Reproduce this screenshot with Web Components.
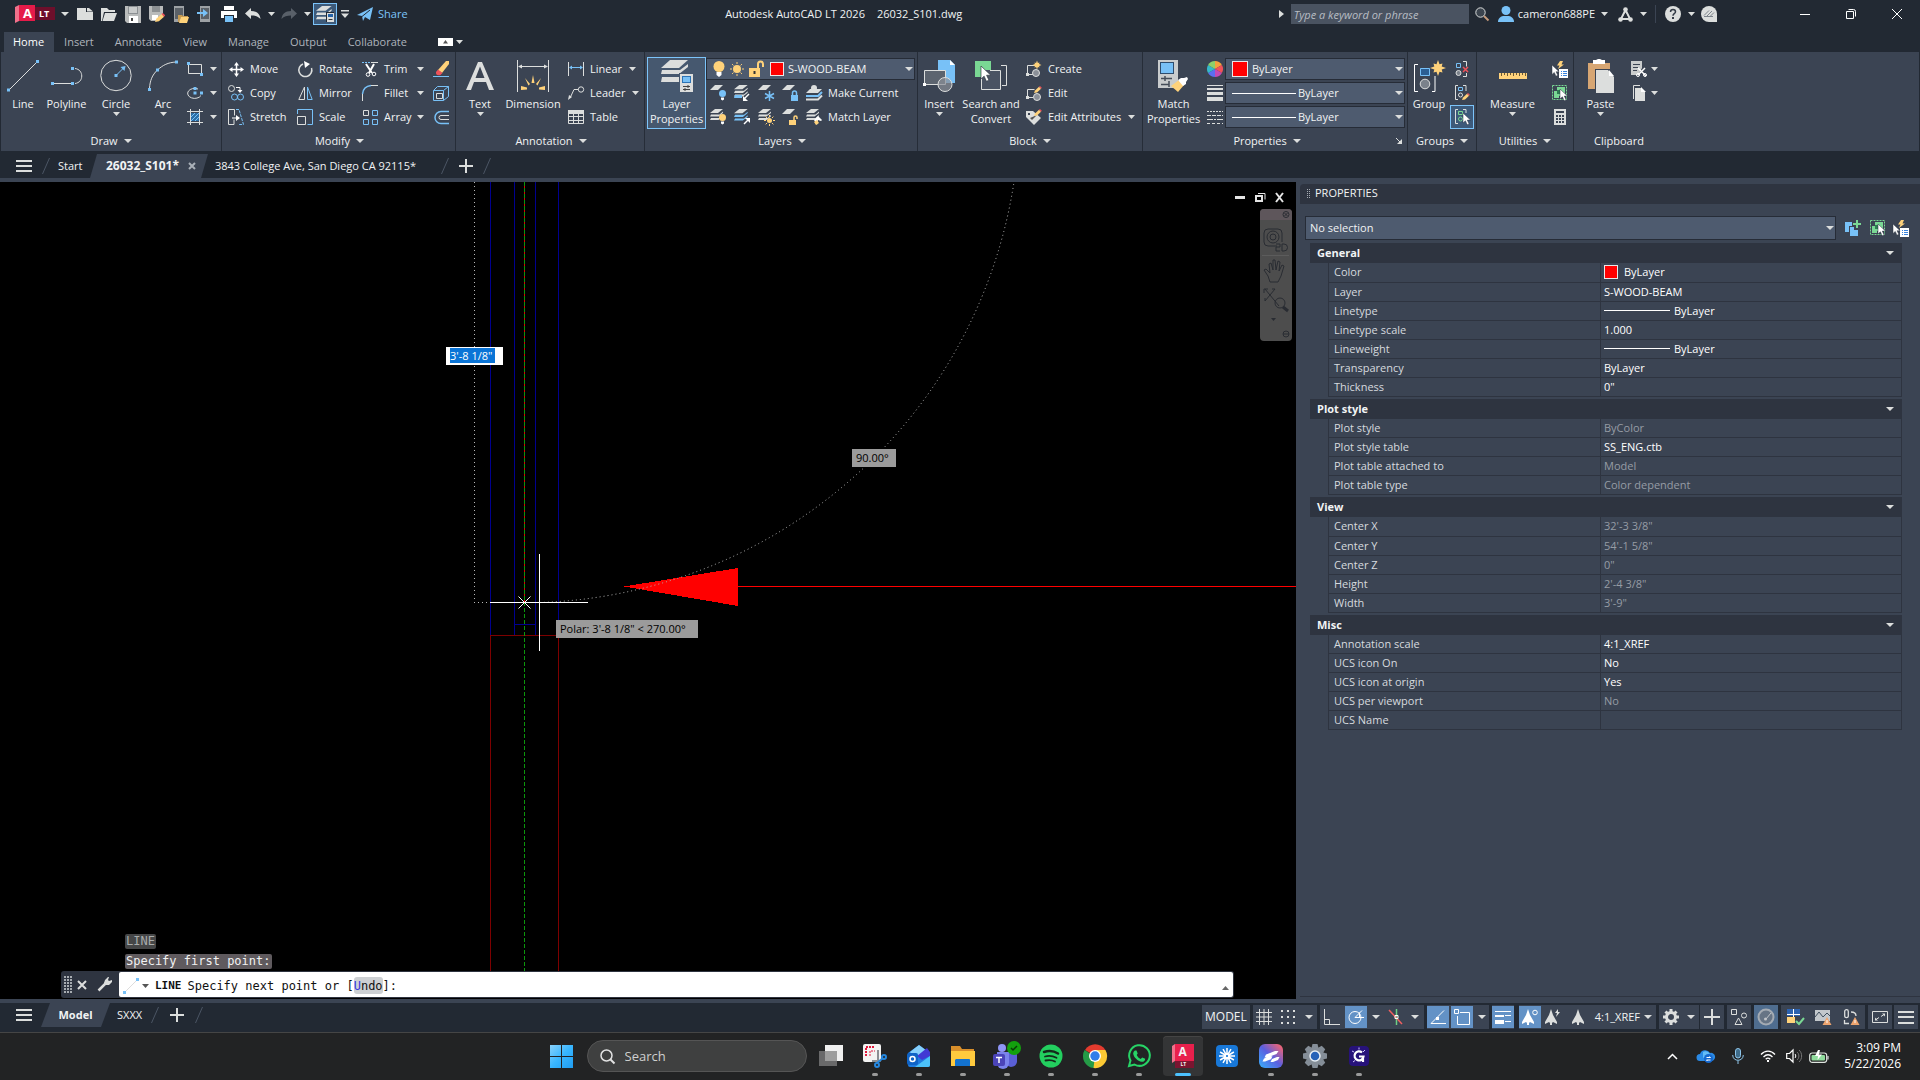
<!DOCTYPE html>
<html lang="en">
<head>
<meta charset="utf-8">
<title>Autodesk AutoCAD LT 2026</title>
<style>
  html, body { margin: 0; height: 100%; }
  body {
    background: #222933; color: #f1f3f4; overflow: hidden;
    font: 11px/16px "Open Sans", "Noto Sans", sans-serif;
    --dark: #222933; --panel: #3b4453; --field: #4e5b6f; --edge: #262c37; --head: #2e3440;
    --accent: #7cc4fa; --light: #dcdedd;
  }
</style>
</head>
<body>
<cad-app></cad-app>
<script>
const W = '#dcdedd', B = '#78c1f7', Y = '#ffd27a', G = '#7ad894', R = '#f0525a', D = '#3b4453';
const sq = (x, y, c = B) => `<path fill="${c}" d="M${x - 1.5} ${y - 1.5}h3v3h-3z"/>`;
const ln = (d, c = W, w = 1, extra = '') => `<path fill="none" stroke="${c}" stroke-width="${w}" d="${d}" ${extra}/>`;
const fl = (d, c = W) => `<path fill="${c}" d="${d}"/>`;
const cursor = (x, y, s = 1) => `<path transform="translate(${x} ${y}) scale(${s})" fill="#fff" stroke="#2b3340" stroke-width=".5" d="M0 0v10l2.4-2.2 1.8 4 1.9-.9-1.8-3.8h3.2z"/>`;
const pencil = (x, y) => `<g transform="translate(${x} ${y})">${fl('M0 7l1-2.6L5 .8l2 2L3 6.4z', Y)}${fl('M5 .8L6 0l1.800 1.800-.8 1z', R)}</g>`;
const sheets = (x, y, s = 1, low = W) => `<g transform="translate(${x} ${y}) scale(${s})">${fl('M5 0h8L8 4H0z')}${fl('M1 5.500h8.500L13 2.600v1.300L8.500 7.500H0z', low)}${fl('M1 9h8.500L13 6v1.300L8.500 11H0z', low)}</g>`;
const bulb = (x, y, c) => `<g transform="translate(${x} ${y})"><circle cx="3.500" cy="3.500" r="3.500" fill="${c}"/>${fl('M2 7.500h3v2l-1.500 1L2 9.500z', '#fff')}</g>`;
const sun = (x, y, r) => `<circle cx="${x}" cy="${y}" r="${r}" fill="${Y}"/>` + ln([0, 45, 90, 135, 180, 225, 270, 315].map(a => { const c = Math.cos(a * Math.PI / 180), s = Math.sin(a * Math.PI / 180); return `M${x + c * (r + 1)} ${y + s * (r + 1)}L${x + c * (r + 3)} ${y + s * (r + 3)}`; }).join(''), Y);
const star = (x, y, r) => fl(Array.from({ length: 16 }, (_, i) => { const q = i % 2 ? r * .5 : (i % 4 ? r * .8 : r), a = i * Math.PI / 8; return (i ? 'L' : 'M') + (x + q * Math.sin(a)).toFixed(1) + ' ' + (y - q * Math.cos(a)).toFixed(1); }).join('') + 'z', Y);
const rays = (x, y, r0, r1, n, c, w) => ln(Array.from({ length: n }, (_, k) => { const a = k * 2 * Math.PI / n; return `M${(x + r0 * Math.cos(a)).toFixed(1)} ${(y + r0 * Math.sin(a)).toFixed(1)}L${(x + r1 * Math.cos(a)).toFixed(1)} ${(y + r1 * Math.sin(a)).toFixed(1)}`; }).join(''), c, w);

const ICONS = {
  caret: [7, 4, fl('M0 0h7L3.500 4z')],
  bigcaret: [8, 4, fl('M0 0h8L4 4z')],
  up: [7, 4, fl('M0 4h7L3.500 0z', '#666')],
  right: [5, 8, fl('M0 0v8l5-4z')],
  barcaret: [8, 8, fl('M0 0h8v1.500H0zM0 3.500h8L4 8z')],
  logo: [40, 18, fl('M0 2l4-2v16l-4 2z', '#f0718b') + fl('M4 0h16v16H4z', '#e51b49') + fl('M20 2h20v13H20z', '#6d0f2b')],
  new: [16, 12, fl('M0 0h9v4h7v8H0z') + fl('M10 0h2l4 3.500H10z')],
  open: [16, 13, fl('M0 0h6l2 2h6v2H3L1 13H0z') + fl('M4 5h12l-3 8H1.500z')],
  save: [16, 17, fl('M0 0h16v17H2l-2-2z', '#b9bbbb') + fl('M3 0h10v8H3z', '#8c9093') + fl('M4 1h8v6H4z', '#c9cbcb') + fl('M4 10h9v7H4z', '#fff') + fl('M6 12h2v3H6z', '#444')],
  saveas: [17, 17, fl('M0 0h14v9l-6 6H2l-2-2z', '#b9bbbb') + fl('M3 0h8v6H3z', '#8c9093') + fl('M3 9h6v5H3z', '#fff') + `<g transform="translate(6 7) scale(1.300)">${pencil(0, 0)}</g>`],
  phoneopen: [16, 17, fl('M1 0h10v16H1z', '#9da1a5') + fl('M2 2h8v11H2z', '#5b6168') + fl('M5 9h4l1 1h5v2H8l-2 4H5z', '#c79b52') + fl('M8 11h8l-2 6H6z', Y)],
  phonesave: [16, 17, fl('M3 0h10v16H3z', '#9da1a5') + fl('M4 2h8v11H4z', '#5b6168') + ln('M0 7h7', B, 2) + fl('M6 3l5 4-5 4z', B)],
  print: [16, 16, fl('M3 0h10v4H3zM0 5h16v7h-3V9H3v3H0z', '#fff') + fl('M4 10h8v6H4z', B)],
  undo: [16, 12, fl('M6 0v3c6 0 9 3 9.500 8C13 8 10 7.500 6 7.500V11L0 5.500z')],
  redo: [16, 12, fl('M10 0v3C4 3 1 6 .5 11 3 8 6 7.500 10 7.500V11l6-5.500z', '#596069')],
  qlayers: [18, 16, sheets(0, 0, 1.200) + fl('M10 6h8v10h-8z', '#222933') + fl('M11 7h7v9h-7z') + fl('M12 8h5v3h-5z', '#2563a8') + ln('M12.500 13.500h4', '#333')],
  plane: [16, 15, fl('M0 8L16 0l-3 13-5-3-2 4-1-5z', B) + ln('M5 9.500L13 3', '#222933')],
  mag: [14, 14, `<circle cx="5.500" cy="5.500" r="4.700" fill="#3c444e" stroke="${W}"/>` + ln('M9 9l4.500 4.500', '#c59a7b', 2)],
  user: [16, 16, `<circle cx="8" cy="4.500" r="4.500" fill="${B}"/>` + fl('M0 16c0-4 3-5.500 5-6h6c2 .5 5 2 5 6z', B)],
  anode: [15, 15, ln('M3 12L7.500 3l4.500 9M3 12h9', W, 2) + `<circle cx="7.500" cy="2.500" r="2.300" fill="${W}"/><circle cx="2.500" cy="12.500" r="2.300" fill="${W}"/><circle cx="12.500" cy="12.500" r="2.300" fill="${W}"/>` + fl('M7.500 6l2 4h-4z', '#222933')],
  help: [16, 16, `<circle cx="8" cy="8" r="8" fill="${W}"/>` + ln('M5.500 6c0-3.500 5-3.200 5-.3 0 2-2.500 2-2.500 4', '#333b46', 1.500) + fl('M7 11h2v2H7z', '#333b46')],
  chat: [16, 16, fl('M8 0a8 8 0 0 1 8 8v8H8A8 8 0 0 1 8 0z') + ln('M3 9.500l5-5M6 10l5-5M9 10.500l4-4M3 10.500h9', '#7d848c')],
  wmin: [10, 10, ln('M0 5.500h10', '#fff')],
  wmax: [10, 10, ln('M.5 2.500h7v7h-7z', '#fff') + ln('M2.500 .5h5a2 2 0 0 1 2 2v5', '#fff')],
  wclose: [10, 10, ln('M0 0l10 10M10 0L0 10', '#fff')],
  ribmin: [15, 8, fl('M0 0h15v8H0z', '#fff') + fl('M5 5.500h5L7.500 2z', '#555')],

  line: [32, 32, ln('M3 29L29 3') + sq(1.5, 30) + sq(30.5, 1.5)],
  polyline: [32, 32, ln('M2 23.500h19') + ln('M24 8.500c9 1 9 14 0 15') + sq(1.5, 23.5) + sq(21.5, 8.5) + sq(21.5, 23.5)],
  circle: [32, 32, `<circle cx="16" cy="15.500" r="15.200" fill="none" stroke="${W}"/>` + ln('M16 15.500l8-8', B) + fl('M25.500 6l-1 5-4-4z', B) + sq(16, 15.5)],
  arc: [32, 32, ln('M2.500 28C3 21 5 15 10.500 10 16 5 21 2.500 29 2') + sq(2.5, 29.5) + sq(10.5, 10) + sq(29.5, 2)],
  rect: [16, 14, ln('M1.500 2.500h13v9h-13z') + sq(1.5, 1.5) + sq(14.5, 12.500)],
  ellipse: [16, 12, ln('M14 8.500A7 5 0 1 1 11 2') + sq(8, 1.5) + sq(8, 6) + sq(14.5, 6)],
  hatch: [16, 16, fl('M4 4h8v8H4z', '#2b6ea6') + ln('M4 8l4-4M4 12l8-8M8 12l4-4', B) + ln('M3.500 0v16M12.500 0v16M0 2.500h16M0 13.500h16')],
  move: [15, 15, ln('M7.500 2v11M2 7.500h11', '#fff', 1.500) + fl('M7.500 0L10 3.500H5zM7.500 15L10 11.500H5zM0 7.500L3.500 5v5zM15 7.500L11.500 5v5z', '#fff')],
  rotate: [15, 16, ln('M5 3A6.500 6.500 0 1 0 13.500 7', W, 1.500) + fl('M6 0l6 3-5 4z', '#fff')],
  trim: [16, 16, ln('M0 1.500h8', B, 1, 'stroke-dasharray="2 1"') + ln('M9 1.500h7') + ln('M4 3l6 9M12 3L7 12', '#fff', 2) + `<circle cx="6" cy="13.500" r="1.800" fill="none" stroke="#fff"/><circle cx="12" cy="13" r="1.800" fill="none" stroke="#fff"/>`],
  erase: [16, 16, fl('M5 9l8-9h3v3l-7 9z', Y) + fl('M3 11l2-2.500L9.500 12 7.500 14c-3 1-5-.5-4.500-3z', R) + ln('M0 15.500h16', B)],
  copy: [16, 16, `<circle cx="3.500" cy="3.500" r="3" fill="none" stroke="${W}"/><circle cx="6.500" cy="12" r="3" fill="none" stroke="${B}"/><circle cx="12.500" cy="12" r="3" fill="none" stroke="${B}"/>` + ln('M8 2.500h4v3', '#fff') + fl('M9.500 5h5L12 8z', '#fff')],
  mirror: [15, 14, ln('M.8 13.500H6.500V1z') + ln('M14.200 13.500H9.500V1z', B)],
  fillet: [16, 16, ln('M.5 16V9M9 .5h7') + ln('M.5 9C1 4 4 1 9 .5', B, 1.500)],
  explode: [16, 15, ln('M.5 4.500h10v10H.5z', B) + ln('M.5 4.500l4-4h11v10l-5 4M10.500 4.500l5-4', B) + ln('M3.500 7.500h6v5h-6z', W) ],
  stretch: [16, 16, ln('M6 10.500v5H.5V.5h6v6') + ln('M4 9h5', '#fff') + fl('M8 6l4 3-4 3z', '#fff') + ln('M8 .5h3l4.500 15H11', B, 1, 'stroke-dasharray="3 1"')],
  scale: [16, 16, ln('M.5 5V.5h15v15h-5', B) + ln('M.5 7.500h8v8h-8z')],
  array: [15, 15, ln('M.5 .5h5v5h-5z') + ln('M9.500 .5h5v5h-5zM.5 9.500h5v5h-5zM9.500 9.500h5v5h-5z', B)],
  offset: [16, 13, ln('M16 .5H8a6 6 0 0 0 0 12h8', B, 1.500) + ln('M16 4.500H8a2 2 0 0 0 0 4h8')],

  text: [28, 30, fl('M0 29L12 1h4l12 28h-5l-3-8H8l-3 8zM9.500 17h9L14 5.500z')],
  dim: [32, 32, ln('M.5 0v32M31.500 0v32') + ln('M2 6.500h28') + fl('M1 6.500l4-2v4zM31 6.500l-4-2v4z') + fl('M16 15l1.500 8h-3zM8 18l5 6-1.500 1.500zM24 18l-5 6 1.500 1.500zM4 26l6 1.500v2L4 30zM28 26v4l-6-.5v-2z', Y)],
  linear: [16, 14, ln('M.5 0v14M15.500 0v14') + ln('M2 5.500h12', B) + fl('M1 5.500l3-2v4zM15 5.500l-3-2v4z', B)],
  leader: [16, 14, ln('M2 12l4-8.500h4.500', W) + `<circle cx="13" cy="3.500" r="2.700" fill="none" stroke="${W}"/>` + fl('M0 14l1-5 3 2z')],
  table: [16, 14, fl('M0 0h16v4H0z') + ln('M.5 .5h15v13H.5zM.5 6.500h15M.5 10.500h15M5.500 3v11M10.500 3v11')],
  layerprop: [32, 33, fl('M9 0h18L18 8H0z') + fl('M1 10h18l8-6v3l-9 7H0z') + fl('M1 17h18l2-2v5l-3 2H0z') + fl('M18 13h14v20H18z', '#46586f') + fl('M19 14h13v18H19z') + fl('M21 16h9v7h-9z', '#2d74b5') + fl('M22 17h7v5h-7z', B) + ln('M22 26.500h7M22 29.500h7M27 25v3M24 28v3', '#444')],
  lbulb: [12, 16, `<circle cx="6" cy="5.500" r="5.500" fill="${Y}"/>` + fl('M3.500 11h5v3L6 16l-2.500-2z', '#fff')],
  lsun: [16, 16, sun(8, 8, 4)],
  lunlock: [15, 16, fl('M0 7h11v9H0z', Y) + ln('M9 7V3a2.500 2.500 0 0 1 5 0v3', Y, 2) + fl('M4.500 10h2v3h-2z', '#333')],
  loff: [16, 16, fl('M5 0h8L8 5H0z') + bulb(9, 5, B)],
  liso: [16, 16, sheets(0, 0, 1.05) + fl('M1 10h7v3H0z', B) + ln('M15 9l-5 5', '#fff', 1.500) + fl('M9 11v5h5z', '#fff')],
  lfreeze: [16, 16, fl('M5 0h8L8 5H0z') + ln('M11.500 6v10M7 8.500l9 5M16 8.500l-9 5', B, 1.500)],
  llock: [16, 16, fl('M5 0h8L8 5H0z') + fl('M9 10h7v6H9z', B) + ln('M10.500 10V8a2 2 0 0 1 4 0v2', B, 1.500)],
  lcur: [16, 16, fl('M4 4h12l-4 4H0z') + ln('M0 11h12l4-4', B, 2) + ln('M0 14.500h12l4-4', W, 2) + `<circle cx="8" cy="3" r="3" fill="${W}"/>`],
  lon: [16, 16, sheets(0, 0, 1) + bulb(9, 5, Y)],
  luniso: [16, 16, sheets(0, 0, 1.05, B) + ln('M10 15l5-5', '#fff', 1.500) + fl('M16 9v5l-5-5z', '#fff')],
  lthaw: [16, 16, sheets(0, 0, 1) + sun(11.5, 11.5, 2.5)],
  lunlk: [16, 16, fl('M5 0h8L8 5H0z') + fl('M7 11h7v5H7z', Y) + ln('M12 11V8.500a1.500 1.500 0 0 1 3 0V10', Y, 1.500)],
  lmatch: [16, 16, sheets(0, 0, 1) + fl('M8 11l4-4 4 4-1 1-3-1-1 5z', '#fff') + fl('M8 13l3-2 2 3-3 2z', Y)],

  insert: [32, 33, fl('M15 0h12l5 5v18H15z', B) + fl('M27 0v5h5z', '#fff') + fl('M1.500 10.500h21v14h-21z', '#5c646f') + ln('M1.500 24.500v-14h21v14H1.500z') + `<circle cx="22" cy="24.500" r="7" fill="#8b9098" fill-opacity=".7" stroke="${W}"/>` + fl('M0 23h3v3H0z', '#fff')],
  searchconv: [32, 30, fl('M0 0h16v16H0z', G) + ln('M26 4.500h5.500v20H27') + fl('M6 9h20v20H6z', '#4a5363') + ln('M6.500 16v12.500h19v-19H15') + cursor(6, 5, 1.3)],
  create: [16, 16, ln('M1.500 13V4.500h8M3 13.500h4', W) + fl('M0 12h3v3H0z') + `<circle cx="10" cy="12" r="3.500" fill="#8b9098" stroke="${W}"/>` + star(11, 4, 4.5)],
  bedit: [16, 16, ln('M1.500 12V4.500h7M3 12.500h4', W) + fl('M0 11h3v3H0z') + `<circle cx="11" cy="12" r="3.500" fill="#8b9098" stroke="${W}"/>` + pencil(8, 1)],
  attr: [16, 16, fl('M0 2h7l8 7-7 7-8-8z') + fl('M2 4h2v2H2z', D) + fl('M4 9l2 2 5-5', '#555') + pencil(8, 0)],
  matchprop: [32, 32, fl('M0 0h20v28H0z', '#c9cccd') + fl('M2 2h14v12H2z', '#2e4d6e') + fl('M3 3h12v10H3z', B) + ln('M3 18.500h11M7 16v5M3 24.500h8M11 21v6', '#454d59', 1.500) + fl('M13 26l8-6 5 5-6 7z', Y) + fl('M20 20l3-2h3l3-1 1 2-2 3 0 2-3 2z', '#fff')],
  wheel: [16, 16, [['#f4a03c', 0], ['#f0525a', 60], ['#c44ab4', 120], ['#5b6ef0', 180], ['#35b8c9', 240], ['#8cd06a', 300]].map(([c, a]) => `<path transform="rotate(${a} 8 8)" fill="${c}" d="M8 8V0a8 8 0 0 1 6.900 4z"/>`).join('')],
  lweights: [16, 16, fl('M0 0h16v1H0zM0 3h16v2H0zM0 7h16v3H0zM0 12h16v4H0z')],
  ltypes: [16, 13, ln('M0 .5h16', W, 1, 'stroke-dasharray="2 1"') + ln('M0 4.500h16', W, 1, 'stroke-dasharray="4 1"') + ln('M0 8.500h16', W, 1, 'stroke-dasharray="6 1 2 1"') + ln('M0 12.500h16', W, 1, 'stroke-dasharray="3 2"')],
  launcher: [6, 6, ln('M0 0l4 4', W) + fl('M6 1v5H1z')],
  group: [32, 32, ln('M5 4.500H1.500v27H5M19 31.500h3V16', '#fff') + fl('M7 8h10v8H7z', '#2b5f94') + ln('M7.500 8.500h9v7h-9z', B) + `<circle cx="12" cy="24" r="4.800" fill="#7b828b" stroke="${W}"/>` + star(25, 8, 8)],
  ungroup: [14, 16, ln('M1.500 2.500h4v4h-4z', B) + `<circle cx="3.500" cy="12" r="2.500" fill="#7b828b" stroke="${W}"/>` + ln('M8 .5h3.500v5M11.500 12v3.500H8') + ln('M8 6l5 5M13 6l-5 5', R, 1.500)],
  gedit: [15, 16, ln('M3 .5H.5v14H3M8 .5h3V6') + ln('M3.500 2.500h4v3h-4z', B) + `<circle cx="5.500" cy="10" r="2" fill="none" stroke="${W}"/>` + `<g transform="translate(7 8)">${pencil(0, 0)}</g>`],
  gsel: [15, 16, ln('M3 .5H.5v14H3M8 .5h3V4') + ln('M3.500 2.500h4v3h-4z', G) + `<circle cx="5.500" cy="10" r="2" fill="none" stroke="${G}"/>` + cursor(8, 4)],
  measure: [28, 6, fl('M0 0h28v6H0z', Y) + ln('M2.500 0v3M5.500 0v2M8.500 0v3M11.500 0v2M14.500 0v3M17.500 0v2M20.500 0v3M23.500 0v2M26.500 0v3', '#6b5a36')],
  qsel: [16, 17, fl('M8 0h3L9.500 3.500H12L6 8l1.500-3.500H5z', Y) + fl('M7 8h9v9H7z', '#fff') + ln('M9 10.500h1M11 10.500h4M9 12.500h1M11 12.500h4M9 14.500h1M11 14.500h4', '#3a84dd') + cursor(0, 4, .95)],
  selall: [15, 16, ln('M.5 .5h14v14H.5z', G, 1, 'stroke-dasharray="2 1"') + fl('M2 6h3V2h8v9H7v2H2z', G) + fl('M5 5h3v4H5z', '#2e7d52') + cursor(8, 4)],
  calc: [12, 16, fl('M0 0h12v16H0z') + fl('M2 2h8v2H2zM2 6h2v2H2zM5 6h2v2H5zM8 6h2v2H8zM2 9h2v2H2zM5 9h2v2H5zM8 9h2v2H8zM2 12h2v2H2zM5 12h2v2H5zM8 12h2v2H8z', '#3b4453')],
  paste: [26, 33, fl('M0 3h22v26H0z', '#d7a673') + fl('M5 0h3l2-1h2l2 1h3v4H5z', '#fff') + fl('M7 9h18v24H7z', '#3b4453') + fl('M8 10h12l6 7v16H8z') + fl('M21 10v6h5z', '#fff')],
  cut: [16, 16, fl('M0 0h11v7l-4 7H0z', '#c9cccd') + ln('M2 3.500h7M2 6.500h5M2 9.500h4', '#3b4453') + ln('M7 7l8 8M14 7l-7 7', '#fff', 1.500) + `<circle cx="7" cy="14" r="1.500" fill="none" stroke="#fff"/><circle cx="14" cy="14" r="1.500" fill="none" stroke="#fff"/>`],
  copyclip: [13, 16, ln('M1.500 14V.5H8') + fl('M3 3h6l4 4v9H3z') + fl('M9 2v5h5z', '#fff')],

  burger: [16, 12, fl('M0 0h16v2H0zM0 5h16v2H0zM0 10h16v2H0z')],
  plus: [14, 14, fl('M6 0h2v6h6v2H8v6H6V8H0V6h6z')],
  slash: [8, 16, ln('M.5 16L7.500 0', '#4b5564')],
  tabx: [8, 8, ln('M1 1l6 6M7 1L1 7', '#a9b0b8', 2)],

  mmin: [10, 3, fl('M0 0h10v3H0z', '#e4e4e4')],
  mmax: [11, 10, ln('M1 4h6v5H1z', '#e4e4e4', 2) + ln('M3 1.500h7v6', '#e4e4e4')],
  mclose: [9, 9, ln('M1 0l7 9M8 0L1 9', '#e4e4e4', 2)],
  navbar: [32, 132, `<rect width="32" height="132" rx="4" fill="#4d4d4d"/>` + fl('M0 4a4 4 0 0 1 4-4h24a4 4 0 0 1 4 4v7H0z', '#5e565b') + ln('M2 46.500h27', '#5c5c5c') + `<g fill="none" stroke="#292c32"><circle cx="26" cy="5.500" r="3"/><path d="M24.500 4l3 3M27.500 4l-3 3"/><path d="M17 37H8a4 4 0 0 1-4-4v-9a4 4 0 0 1 4-4h10a4 4 0 0 1 4 4v9"/><circle cx="13" cy="28" r="6"/><circle cx="13" cy="28" r="3"/><path d="M16 35h4v3h-4v4h4M22 35v7h2a3 3 0 0 0 0-7z"/><path d="M8 67l-4-6 2-1 4 4-1-9 2-1 2 7v-10h2l1 10 2-9 2 1-1 9 3-6 2 1-3 10-3 6h-8zM5 80l14 17M15 80L5 92M4 84v-4h4M15 80h-3M5 92v-3"/><circle cx="20" cy="94" r="5"/><path d="M23 98l5 4" stroke-width="3"/><circle cx="26" cy="125" r="3"/><path d="M23 125h6"/></g>` + fl('M11 109h5l-2.500 3z', '#292c32')],
  grip: [7, 17, ln('M1 0v17M4 0v17M7 0v17', '#d0d3d6', 1.500, 'stroke-dasharray="2 1"')],
  pgrip: [3, 9, ln('M.5 0v9M2.500 0v9', '#a6abb2', 1, 'stroke-dasharray="1 1"')],
  cx: [10, 10, ln('M1 1l8 8M9 1L1 9', '#dcdedd', 2)],
  wrench: [15, 15, ln('M1.500 13.500L9 6', W, 2.500) + fl('M8 3l3-3 1 0-1 3 1 1 3-1v2l-3 3H9L7 6z')],
  cline: [16, 16, ln('M2 14L14 2', '#ddd') + sq(1.5, 14.5) + sq(14.5, 1.5)],
  ccaret: [7, 4, fl('M0 0h7L3.500 4z', '#555')],

  grid: [16, 16, ln('M3.500 0v16M8 0v16M12.500 0v16M0 3.500h16M0 8h16M0 12.500h16')],
  snap: [14, 14, fl('M0 0h2v2H0zM6 0h2v2H6zM12 0h2v2h-2zM0 6h2v2H0zM6 6h2v2H6zM12 6h2v2h-2zM0 12h2v2H0zM6 12h2v2H6zM12 12h2v2h-2z')],
  ortho: [16, 16, ln('M.5 0v15.500H16M.5 10.500h5v5')],
  polar: [16, 16, `<circle cx="7" cy="8.500" r="6" fill="none" stroke="#fff"/>` + ln('M7 8.500h9M7 8.500l7-7M11.500 3.500v5', '#fff')],
  iso: [14, 16, ln('M7.500 0v16', '#6fcf86', 1.500) + ln('M0 1l13 14', '#f06060', 1.500) + ln('M6 6.500h3v3H6z', '#fff')],
  otrack: [16, 14, ln('M16 13.500H1L14 .5', '#fff') + fl('M6 7h3v3H6z', '#fff')],
  osnap: [16, 16, ln('M6 3.500h9.500v12h-12V7', '#fff') + ln('M.5 .5h4v4h-4z', '#fff')],
  lw: [16, 13, fl('M0 0h16v1H0zM0 4h9v2H0zM10 4h6v1h-6zM0 9h9v4H0zM10 10h6v1h-6z', '#fff')],
  annovis: [16, 16, fl('M6 0l2 6 4 7v2l-4-2-1 1v2H5v-2l-1-1-4 2v-2l4-7z', '#fff') + `<circle cx="13" cy="3.500" r="2.300" fill="none" stroke="#fff"/>`],
  annoauto: [16, 16, fl('M6 0l2 6 4 7v2l-4-2-1 1v2H5v-2l-1-1-4 2v-2l4-7z') + fl('M13 0l-3 4h2l-1 4 4-5h-2z')],
  anno: [14, 16, fl('M7 0l2 6 4 7v2l-4-2-1 1v2H6v-2l-1-1-4 2v-2l4-7z')],
  gear: [16, 16, `<circle cx="8" cy="8" r="4.500" fill="none" stroke="${W}" stroke-width="3"/>` + ln('M8 0v3M8 13v3M0 8h3M13 8h3M2.500 2.500l2 2M11.500 11.500l2 2M13.500 2.500l-2 2M4.500 11.500l-2 2', W, 3)],
  splus: [16, 16, fl('M7 0h2v7h7v2H9v7H7V9H0V7h7z')],
  shapes: [16, 16, ln('M.5 .5h5v5h-5zM4 15.500h7L7.500 9z') + `<circle cx="13" cy="6.500" r="2.500" fill="none" stroke="${W}"/>`],
  isolate: [18, 18, `<circle cx="9" cy="9" r="7.500" fill="#667485" stroke="#a4abb3" stroke-width="2"/>` + ln('M9 11l5-6', '#c1c5ca') + `<circle cx="8.500" cy="11" r="1.500" fill="#c1c5ca"/>`],
  hw: [17, 16, fl('M0 0h13v7H0z', '#2c62b0') + fl('M0 8h8v6H0z', Y) + ln('M6.500 0v8M0 5.500h13', '#fff') + ln('M9 12l3 3 5-6', G, 2)],
  mon: [16, 16, fl('M0 1h15v11H0z', '#c3c8cc') + ln('M0 8l4-5 4 5 4-4 3 3', '#40505f') + fl('M12 8l4.500 8h-9z', '#eea56f') + ln('M12 11v3', '#fff')],
  asso: [17, 16, `<rect x="1.700" y=".7" width="3.600" height="8" rx="1.800" fill="none" stroke="${W}" stroke-width="1.300"/>` + ln('M1.500 11v3.500H6M8 3c3 0 5 1 5 4', W, 1.300) + fl('M12 8l4.500 8h-9z', '#eea56f') + ln('M12 11v3', '#fff')],
  clean: [16, 12, ln('M.5 .5h15v11H.5z') + ln('M4 8.500l3-2M12 3.500l-3 2') + fl('M3 9.500V6.500l3 3zM13 2.500v3l-3-3z')],
  custom: [16, 13, fl('M0 0h16v2H0zM0 5h16v2H0zM0 11h16v2H0z')],

  paddobj: [16, 16, fl('M0 2h7v10H0z', B) + fl('M4 6h5v3h5v7H6V12H4z', D) + fl('M5 7h4v3h4v6H5z', B) + ln('M12 0v8M8 4h8', G, 2)],

  win: [23, 23, `<linearGradient id="w" x2="1" y2="1"><stop stop-color="#8ad2fb"/><stop offset=".5" stop-color="#38b6ff"/><stop offset="1" stop-color="#1f9cf0"/></linearGradient><path fill="url(#w)" d="M0 0h11v11H0zM12 0h11v11H12zM0 12h11v11H0zM12 12h11v11H12z"/>`],
  smag: [15, 15, `<circle cx="6.500" cy="6.500" r="5.500" fill="none" stroke="#e2e2e2" stroke-width="1.500"/>` + ln('M10.500 10.500l4 4', '#e2e2e2', 2)],
  taskview: [24, 22, fl('M6 0h18v16H6z', '#f0f0f0') + fl('M0 6h18v15H0z', 'rgba(130,130,130,.75)')],
  snip: [24, 24, `<rect width="18" height="18" rx="2" fill="#f3f3f3"/>` + ln('M3 12V3h9', '#e0193c', 2, 'stroke-dasharray="2 1"') + ln('M7 12V7h5', '#e0193c', 1, 'stroke-dasharray="2 1"') + ln('M15 6v11H9', '#8b8f94', 2) + ln('M14 19l6-5', '#2588e0', 2) + `<circle cx="21" cy="13" r="2" fill="none" stroke="#2588e0" stroke-width="2"/><circle cx="14" cy="21" r="2" fill="none" stroke="#2588e0" stroke-width="2"/>`],
  outlook: [24, 24, fl('M1 9L12 1l11 8v12a2 2 0 0 1-2 2H3a2 2 0 0 1-2-2z', '#1f7be0') + fl('M8 4l4-3 8 6-12 7-5-6z', '#86d0fb') + fl('M10 12l10-8 3 4v4l-8 4z', '#4138d4') + fl('M8 23l15-11v9a2 2 0 0 1-2 2z', '#4cc2fa') + `<rect y="9" width="11" height="12" rx="2" fill="#0f63c6"/><circle cx="5.500" cy="15" r="2.500" fill="none" stroke="#fff" stroke-width="1.500"/>`],
  files: [24, 22, fl('M0 1h9l2 3h12v4H0z', '#d98f2b') + fl('M0 6h24v15H0z', '#ffca3e') + fl('M5 14h13a1 1 0 0 1 1 1v6H4v-6z', '#1372cf')],
  teams: [28, 26, `<circle cx="9" cy="5" r="4" fill="#8e95f5"/>` + fl('M13 9h8a3 3 0 0 1 3 3v7a6 6 0 0 1-11 2z', '#5a5fd6') + fl('M4 9h12v11a6 6 0 0 1-12 0z', '#7b83eb') + `<rect y="11" width="12" height="12" rx="2" fill="#4b44b8"/>` + ln('M3 14.500h6M6 14v6', '#fff', 1.500) + `<circle cx="21" cy="5" r="7" fill="#13a10e"/>` + ln('M18 5l2 2 4-4', '#083c07', 1.500)],
  spotify: [24, 24, `<circle cx="12" cy="12" r="11.500" fill="#23cf5f"/>` + ln('M5 8c5-1.500 10-1 14 1.500', '#14291b', 2.500, 'stroke-linecap="round"') + ln('M6 12.500c4-1 8-.5 11.500 1.300M6.500 16.500c3.500-.8 7-.4 9.500 1', '#14291b', 1.800, 'stroke-linecap="round"')],
  chrome: [24, 24, fl('M12 12L2 6A12 12 0 0 1 22.400 6z', '#e33b2e') + fl('M12 12h-1L1.600 6A12 12 0 0 0 10.500 24L16 14z', '#259b47') + fl('M12 12l0-6h10.400A12 12 0 0 1 10.500 24z', '#fcc934') + `<circle cx="12" cy="12" r="6" fill="#fff"/><circle cx="12" cy="12" r="4.700" fill="#2f7de9"/>`],
  whatsapp: [24, 24, `<path d="M2 22l1.500-5.500A10.300 10.300 0 1 1 7.500 20.500z" fill="none" stroke="#27d366" stroke-width="2"/>` + fl('M8 6.500h1.500l1.200 3-1 1.500c1 2 2 3 4 4l1.500-1.500 3 1.300c0 2.500-2 3.200-3.500 3-4-.6-8-4.500-8.500-8 0-1.500.8-2.800 1.800-3.300z', '#27d366')],
  acad: [22, 24, fl('M0 2l3-2v17l-3 2z', '#f0718b') + fl('M3 0h19v17H3z', '#e8204c') + fl('M3 17h19v7H3z', '#7b1530')],
  claude: [22, 22, `<rect width="22" height="22" rx="4" fill="#1878d8"/>` + rays(11, 11, 1, 8, 12, '#fff', 1.5)],
  stripes: [24, 24, `<linearGradient id="s" x1="0" y1="1" x2="1" y2="0"><stop offset=".1" stop-color="#3fa0f5"/><stop offset=".5" stop-color="#5b5fe0"/><stop offset=".9" stop-color="#e8647a"/></linearGradient><rect width="24" height="24" rx="6" fill="url(#s)"/>` + fl('M7 10.500L16 7h3.500l-2 3-9 3.500H5.500zM5 14.500l6-2.300h2.500l-1.500 3-6 2.300H3.500zM13 15l5-2h2.500L19 16l-5 2h-2.500z', '#fff')],
  settings: [24, 24, `<g fill="#858e98"><circle cx="12" cy="12" r="9"/>${[0, 45, 90, 135].map(a => `<path transform="rotate(${a} 12 12)" d="M9.500 0h5l1 4h-7zM9.500 24h5l1-4h-7z"/>`).join('')}</g><circle cx="12" cy="12" r="5" fill="#2762b8" stroke="#e8eef4" stroke-width="1.500"/>`],
  gapp: [20, 20, `<rect width="20" height="20" rx="4" fill="#27127a"/><path d="M10 10.500h4.500A4.500 4.500 0 1 1 13 6.500M14 10v6" fill="none" stroke="#fff" stroke-width="2.200"/>` + ln('M3 5l2 1M4 16l2-1.500M10 1.500v2M16 4l-2 2', '#cfc3ff')],
  tup: [11, 7, ln('M1 6l4.500-4.500L10 6', '#fff', 1.500)],
  cloud: [16, 14, fl('M3 12a3.500 3.500 0 0 1 0-7A5.500 5.500 0 0 1 13 4a4 4 0 0 1 2 8z', '#2a8ae6') + fl('M6 3a5 5 0 0 1 7 2L6 9z', '#64bdf7') + `<circle cx="11.500" cy="9.500" r="4.500" fill="#1669cf"/>` + ln('M9.500 8.500h4l-1-1M13.500 11h-4l1 1', '#fff')],
  mic: [12, 16, `<rect x="3.500" y=".5" width="5" height="9.500" rx="2.500" fill="#3f6d8c" stroke="#8fc6ea"/>` + ln('M.7 7c0 7 10.600 7 10.600 0M6 12.500V16', '#8fc6ea')],
  wifi: [16, 12, ln('M1 4.500c4-4.500 10-4.500 14 0M3.500 7c3-3 6-3 9 0M5.700 9.300c1.500-1.500 3-1.500 4.600 0', '#fff', 1.300) + fl('M7 10h2v2H7z', '#fff')],
  vol: [16, 14, ln('M.7 4.500h2.800L7 1v12L3.500 9.500H.7z', '#fff', 1.200) + ln('M9 5c1 1 1 3 0 4', '#fff') + ln('M11 3c2.500 2 2.500 6 0 8M13 1c3.500 3 3.500 9 0 12', '#777')],
  batt: [20, 13, `<rect x=".7" y="3" width="17" height="9.300" rx="2.500" fill="#222" stroke="#dfe5e0" stroke-width="1.200"/><rect x="2.500" y="5" width="13.500" height="5.500" rx="1" fill="#8fdb9c"/>` + fl('M18.500 6h1v3.500h-1z', '#fff') + fl('M9 0L6 6h3l-.5 4L13 4.500H9.800L11 0z', '#fff')]
};

class El extends HTMLElement {
  constructor() { super(); this.attachShadow({ mode: 'open' }); }
  connectedCallback() {
    this.shadowRoot.innerHTML = `<style>
      * { box-sizing: border-box; }
      :host { box-sizing: border-box; display: block; }
      button, input, select { font: inherit; color: inherit; background: none; border: 0; margin: 0; padding: 0; outline: 0; border-radius: 0; }
      ${this.css || ''}</style>${this.html}`;
  }
  a(n, d = '') { return this.getAttribute(n) ?? d; }
}
const def = (n, c) => customElements.define(n, c);
const i = n => `<cad-icon name="${n}"></cad-icon>`;

def('cad-icon', class extends El {
  css = ':host { display: inline-block; flex: none; line-height: 0; } svg { display: block; overflow: visible; }';
  get html() { const [w, h, m] = ICONS[this.a('name')]; return `<svg width="${w}" height="${h}" viewBox="0 0 ${w} ${h}" aria-hidden="true">${m}</svg>`; }
});

/* icon button; "w" sets the cell width, "on" and "fill" the highlighted states */
def('icon-button', class extends El {
  get css() { return `:host { display: flex; flex: none; width: ${this.a('w', '24')}px; align-self: stretch; }
    button { flex: 1; display: flex; align-items: center; justify-content: center; border: 1px solid transparent; }
    :host([on]) button { border-color: var(--accent); background: #3d5a7a; }
    :host([fill]) button { background: #6392c6; }`; }
  get html() { return `<button aria-label="${this.a('label', this.a('icon'))}">${i(this.a('icon'))}</button>`; }
});

def('small-tool', class extends El {
  get css() { return `:host { display: flex; height: 24px; width: ${this.a('w') ? this.a('w') + 'px' : 'auto'}; }
    button { flex: 1; display: flex; align-items: center; gap: 2px; white-space: nowrap; text-align: left; }
    .i { width: 24px; display: flex; justify-content: center; }
    .c { width: 12px; margin-left: 2px; display: flex; justify-content: center; }
    :host([end]) .c { margin-left: auto; }`; }
  get html() { return `<button><span class="i">${i(this.a('icon'))}</span>${this.a('label')}${this.hasAttribute('caret') ? `<span class="c">${i('caret')}</span>` : ''}</button>`; }
});

def('big-tool', class extends El {
  get css() { return `:host { display: flex; flex: none; width: ${this.a('w')}px; height: 72px; }
    button { flex: 1; display: flex; flex-direction: column; align-items: center; border: 1px solid transparent; padding-top: 2px; line-height: 15px; }
    .i { height: 32px; display: flex; align-items: center; justify-content: center; margin-bottom: 4px; }
    .c { margin-top: 1px; line-height: 0; }
    :host([on]) button { border-color: var(--accent); background: #46586f; }`; }
  get html() { return `<button><span class="i">${i(this.a('icon'))}</span><span>${this.a('label')}</span>${this.hasAttribute('caret') ? `<span class="c">${i('caret')}</span>` : ''}</button>`; }
});

def('drop-box', class extends El {
  css = `:host { display: flex; align-items: center; height: 22px; margin: 1px 0; border: 1px solid var(--edge); background: var(--field); padding: 0 1px 0 6px; }
    select { flex: 1; appearance: none; min-width: 0; height: 100%; padding-left: 4px; }
    :host([tight]) select { padding-left: 2px; }
    cad-icon:last-child { pointer-events: none; }`;
  get html() { return `<slot></slot><select aria-label="${this.a('label')}"><option>${this.a('value')}</option></select>${i('bigcaret')}`; }
});

def('color-chip', class extends El {
  css = ':host { width: 14px; height: 14px; flex: none; background: #f00; border: 1px solid #e8e8e8; }';
  html = '';
});
def('line-sample', class extends El {
  css = ':host { width: var(--len, 64px); height: 1px; flex: none; background: #fff; }';
  html = '';
});

def('title-bar', class extends El {
  css = `:host { display: flex; align-items: center; height: 28px; padding-left: 15px; }
    .logo { position: relative; line-height: 0; display: block; margin-right: 1px; }
    .logo b { position: absolute; top: 1px; left: 8px; font-size: 13px; line-height: 15px; color: #fff; }
    .logo b + b { left: 24px; font-size: 9px; }
    .share { display: flex; align-items: center; gap: 5px; color: var(--accent); height: 28px; padding-left: 4px; }
    .qat, .right, .win { display: flex; align-items: center; height: 28px; }
    .title { flex: 1; display: flex; justify-content: center; gap: 12px; white-space: nowrap; font-size: 11px; padding-left: 4px; }
    input { width: 178px; height: 20px; background: #4a5361; padding: 0 3px; font-style: italic; margin: 0 1px 0 3px; color: #fff; }
    input::placeholder { color: #b8bdc4; }
    .sep { width: 1px; height: 18px; background: #3b4453; margin: 0 5px; }
    .user { white-space: nowrap; }
    .win { margin-left: 61px; }`;
  get html() {
    const b = (n, w = 24) => `<icon-button icon="${n}" w="${w}"></icon-button>`;
    return `<span class="logo">${i('logo')}<b>A</b><b>LT</b></span>
      <div class="qat">${b('bigcaret', 17)}${['new', 'open', 'save', 'saveas', 'phoneopen', 'phonesave', 'print', 'undo'].map(n => b(n)).join('')}${b('caret', 12)}${b('redo')}${b('caret', 12)}
      <icon-button icon="qlayers" on style="height:22px;align-self:center"></icon-button>${b('barcaret', 16)}</div>
      <button class="share">${i('plane')}Share</button>
      <div class="title"><span>Autodesk AutoCAD LT 2026</span><span>26032_S101.dwg</span></div>
      <div class="right">${b('right', 12)}<input aria-label="Search" placeholder="Type a keyword or phrase">${b('mag')}${b('user')}<span class="user">cameron688PE</span>${b('caret', 19)}${b('anode', 22)}${b('caret', 14)}<span class="sep"></span>${b('help', 24)}${b('caret', 12)}${b('chat')}</div>
      <div class="win">${b('wmin', 46)}${b('wmax', 46)}${b('wclose', 46)}</div>`;
  }
});

def('ribbon-tabs', class extends El {
  css = `:host { display: flex; height: 24px; padding: 4px 0 0 4px; color: #aeb4bc; }
    button { padding: 0 11px 0 10px; height: 20px; line-height: 20px; }
    button:first-of-type { background: var(--panel); color: #fff; padding: 0 10px 0 9px; }
    .min { display: flex; align-items: center; margin-left: 20px; }`;
  html = ['Home', 'Insert', 'Annotate', 'View', 'Manage', 'Output', 'Collaborate'].map(t => `<button>${t}</button>`).join('') + `<span class="min">${i('ribmin')}<icon-button icon="caret" w="13"></icon-button></span>`;
});

def('ribbon-panel', class extends El {
  get css() { return `:host { display: flex; flex-direction: column; flex: none; width: ${this.a('w')}px; border-right: 1px solid #262d38; padding-top: 5px; }
    :host([last]) { border: 0; }
    .body { display: flex; height: 72px; }
    .foot { display: flex; align-items: center; height: 22px; padding-top: 2px; }
    .foot button { flex: 1; display: flex; align-items: center; justify-content: center; gap: 6px; }`; }
  get html() { return `<div class="body"><slot></slot></div><div class="foot"><button>${this.a('label')}${this.hasAttribute('last') ? '' : i('bigcaret')}</button><slot name="foot"></slot></div>`; }
});

def('ribbon-bar', class extends El {
  css = `:host { display: flex; height: 99px; background: var(--panel); margin: 0 1px; white-space: nowrap; }
    .col { display: flex; flex-direction: column; }
    .row { display: flex; height: 24px; align-items: center; }
    .grow { flex: 1; }
    .pad { margin-right: 2px; }
    .chips { display: flex; gap: 4px; align-items: center; }
    .wide { white-space: normal; }`;
  get html() {
    const b = (n, w = 24, x = '') => `<icon-button icon="${n}" w="${w}" ${x}></icon-button>`;
    const s = (ic, l, x = '') => `<small-tool icon="${ic}" label="${l}" ${x}></small-tool>`;
    const L = (ic, l, w, x = '') => `<big-tool class="wide" icon="${ic}" label="${l}" w="${w}" ${x}></big-tool>`;
    return `
    <ribbon-panel label="Draw" w="221">${L('line', 'Line', 44)}${L('polyline', 'Polyline', 43)}${L('circle', 'Circle', 56, 'caret')}${L('arc', 'Arc', 38, 'caret')}
      <div class="col">${['rect', 'ellipse', 'hatch'].map(n => `<div class="row">${b(n, 26)}${b('caret', 10)}</div>`).join('')}</div></ribbon-panel>
    <ribbon-panel label="Modify" w="234" style="padding-left:2px">
      <div class="col">${s('move', 'Move', 'w="69"')}${s('copy', 'Copy')}${s('stretch', 'Stretch')}</div>
      <div class="col">${s('rotate', 'Rotate', 'w="65"')}${s('mirror', 'Mirror')}${s('scale', 'Scale')}</div>
      <div class="col">${s('trim', 'Trim', 'w="68" caret end')}${s('fillet', 'Fillet', 'caret end')}${s('array', 'Array', 'caret end')}</div>
      <div class="col">${['erase', 'explode', 'offset'].map(n => `<div class="row">${b(n, 30)}</div>`).join('')}</div></ribbon-panel>
    <ribbon-panel label="Annotation" w="189" style="padding-left:2px">${L('text', 'Text', 44, 'caret')}${L('dim', 'Dimension', 62)}
      <div class="col">${s('linear', 'Linear', 'caret')}${s('leader', 'Leader', 'caret')}${s('table', 'Table')}</div></ribbon-panel>
    <ribbon-panel label="Layers" w="273" style="padding-left:2px">${L('layerprop', 'Layer Properties', 59, 'on')}
      <div class="col grow pad"><drop-box label="Layer" value="S-WOOD-BEAM"><span class="chips">${i('lbulb')}${i('lsun')}${i('lunlock')}<color-chip style="margin-left:2px"></color-chip></span></drop-box>
        <div class="row">${['loff', 'liso', 'lfreeze', 'llock'].map(n => b(n)).join('')}${s('lcur', 'Make Current')}</div>
        <div class="row">${['lon', 'luniso', 'lthaw', 'lunlk'].map(n => b(n)).join('')}${s('lmatch', 'Match Layer')}</div></div></ribbon-panel>
    <ribbon-panel label="Block" w="225">${L('insert', 'Insert', 42, 'caret')}${L('searchconv', 'Search and Convert', 62)}
      <div class="col">${s('create', 'Create')}${s('bedit', 'Edit')}${s('attr', 'Edit Attributes', 'caret')}</div></ribbon-panel>
    <ribbon-panel label="Properties" w="265">${L('matchprop', 'Match Properties', 61)}
      <div class="col">${['wheel', 'lweights', 'ltypes'].map(n => `<div class="row">${b(n, 21)}</div>`).join('')}</div>
      <div class="col grow pad"><drop-box label="Object color" value="ByLayer"><color-chip style="width:16px;height:16px"></color-chip></drop-box>
        <drop-box tight label="Lineweight" value="ByLayer"><line-sample></line-sample></drop-box>
        <drop-box tight label="Linetype" value="ByLayer"><line-sample></line-sample></drop-box></div>
      <icon-button slot="foot" icon="launcher" w="16"></icon-button></ribbon-panel>
    <ribbon-panel label="Groups" w="69">${L('group', 'Group', 42)}
      <div class="col">${['ungroup', 'gedit', 'gsel'].map((n, k) => `<div class="row">${b(n, 24, k == 2 ? 'on' : '')}</div>`).join('')}</div></ribbon-panel>
    <ribbon-panel label="Utilities" w="97">${L('measure', 'Measure', 71, 'caret')}
      <div class="col">${['qsel', 'selall', 'calc'].map(n => `<div class="row">${b(n, 23)}</div>`).join('')}</div></ribbon-panel>
    <ribbon-panel label="Clipboard" w="90" last>${L('paste', 'Paste', 53, 'caret')}
      <div class="col">${['cut', 'copyclip'].map(n => `<div class="row">${b(n, 23)}${b('caret', 8)}</div>`).join('')}</div></ribbon-panel>`;
  }
});

def('file-tabs', class extends El {
  css = `:host { display: flex; align-items: center; height: 27px; padding: 3px 0 0 16px; border: 0; }
    .t { height: 24px; display: flex; align-items: center; white-space: nowrap; }
    .on { background: var(--panel); clip-path: polygon(7px 0, 100% 0, calc(100% - 7px) 100%, 0 100%); padding: 0 12px 0 16px; gap: 9px; font-size: 12px; font-weight: 700; width: 118px; }
    .start { margin: 0 8px 0 8px; width: 24px; }
    .doc { margin: 0 15px 0 7px; }
    cad-icon[name=slash] { margin: 0 0 0 10px; }
    .p { margin: 0 0 0 10px; display: flex; }`;
  html = `${i('burger')}${i('slash')}<button class="t start">Start</button><div class="t on"><span>26032_S101*</span>${i('tabx')}</div><button class="t doc">3843 College Ave, San Diego CA 92115*</button>${i('slash')}<button class="p" aria-label="New tab">${i('plus')}</button>${i('slash')}`;
});

def('drawing-area', class extends El {
  css = `:host { position: relative; flex: 1; background: #000; overflow: hidden; min-width: 0; }
    .model { position: absolute; inset: 0; width: 100%; height: 100%; }
    .tip { position: absolute; height: 18px; line-height: 18px; background: #9b9b9b; color: #000; padding: 0 4px; white-space: nowrap; }
    .len { left: 446px; top: 165px; width: 57px; background: #fff; }
    .len input { width: 45px; height: 15px; background: #0a74d6; color: #fff; display: block; margin-top: 1px; line-height: 15px; }
    .ang { left: 852px; top: 267px; width: 44px; }
    .pol { left: 556px; top: 438px; width: 142px; }
    .mdi { position: absolute; top: 5px; right: 8px; display: flex; height: 20px; align-items: center; }
    .nav { position: absolute; right: 4px; top: 27px; }
    command-line { position: absolute; left: 61px; right: 62px; bottom: 1px; }
    .hist { position: absolute; left: 125px; bottom: 30px; display: flex; flex-direction: column; align-items: flex-start; gap: 5px; }
    .hist span { font: 12px/15px "DejaVu Sans Mono", monospace; background: #5f5a5e; color: #f2f2f2; border-radius: 2px; padding: 0 1px; }
    .hist span:first-child { background: #454647; color: #a9acac; }`;
  html = `<svg class="model" aria-hidden="true" fill="none" shape-rendering="crispEdges">
      <g stroke="#00008f"><path d="M490.500 0V453M514 0V453M535.500 0V453M558.500 0V453M514 442.500H535"/></g>
      <g stroke="#7d0000"><path d="M490 453.500H559M490.500 453V789M558.500 453V789"/></g>
      <path stroke="#e00000" d="M524.500 0V420"/><path stroke="#0c960c" stroke-dasharray="4 2" d="M524.500 0V789"/>
      <path fill="#f00" d="M624 404.500L738 386v38z"/><path stroke="#f00" d="M738 404.500H3000"/>
      <g stroke="#b9b9b9" stroke-dasharray="1 3"><path d="M474.500 0V420M474 420.500H490"/><path shape-rendering="auto" d="M540 420.500A496 496 0 0 0 1014 0"/></g>
      <g stroke="#fff"><path d="M539.500 372V469M490 420.500H588"/><path shape-rendering="auto" d="M518.500 414.500l12 12M530.500 414.500l-12 12"/></g>
    </svg>
    <div class="tip len"><input aria-label="Length" value="3'-8 1/8&quot;"></div>
    <div class="tip ang">90.00°</div>
    <div class="tip pol">Polar: 3'-8 1/8" &lt; 270.00°</div>
    <div class="mdi"><icon-button icon="mmin" w="20"></icon-button><icon-button icon="mmax" w="20"></icon-button><icon-button icon="mclose" w="18"></icon-button></div>
    <div class="nav">${i('navbar')}</div>
    <div class="hist"><span>LINE</span><span>Specify first point:</span></div>
    <command-line></command-line>`;
});

def('command-line', class extends El {
  css = `:host { display: flex; height: 27px; background: var(--head); border-radius: 3px; padding: 1px 1px 1px 3px; align-items: stretch; }
    .in { flex: 1; margin-left: 3px; display: flex; align-items: center; background: #fff; color: #111; border-radius: 2px; padding: 2px 4px 0; font: 12px/16px "DejaVu Sans Mono", monospace; white-space: pre; }
    .in b { margin: 0 6px; font-size: 11px; } .in .c { margin-left: 3px; display: flex; }
    .in button { background: #cdd0d3; border-radius: 3px; padding: 0; height: 17px; line-height: 16px; }
    .in button i { color: #3636e0; font-style: normal; }
    .up { margin-left: auto; }
    .g { display: flex; align-items: center; }`;
  html = `<span class="g">${i('grip')}</span><icon-button icon="cx" w="22"></icon-button><icon-button icon="wrench" w="23"></icon-button>
    <div class="in">${i('cline')}<span class="c">${i('ccaret')}</span><b>LINE</b><span>Specify next point or [</span><button><i>U</i>ndo</button><span>]:</span><span class="up">${i('up')}</span></div>`;
});

def('property-group', class extends El {
  css = `:host { margin: 0 18px 2px 14px; }
    header { display: flex; align-items: center; height: 20px; background: var(--head); padding: 0 8px 0 7px; font-weight: 700; }
    header button { margin-left: auto; display: flex; }
    table { width: calc(100% - 18px); margin-left: 18px; border-collapse: collapse; table-layout: fixed; }
    tr { height: 19px; }
    th, td { height: 18px; padding: 0 0 0 5px; font-weight: 400; text-align: left; border: 1px solid var(--head); border-top: 0; color: #d6dadf; line-height: 16px; white-space: nowrap; overflow: hidden; }
    th { width: 272px; } td { padding-left: 3px; color: #fff; }
    td.off { color: #969ca5; }
    .v { display: flex; align-items: center; gap: 6px; height: 16px; --len: 66px; }
    .v line-sample { margin-right: -2px; }`;
  get html() {
    const rows = JSON.parse(this.a('rows'));
    const v = t => t[0] == '#' ? `<span class="v"><color-chip></color-chip>${t.slice(1)}</span>` : t[0] == '-' ? `<span class="v"><line-sample></line-sample>${t.slice(1)}</span>` : t;
    return `<header>${this.a('label')}<button aria-label="Collapse">${i('bigcaret')}</button></header><table>${rows.map(r => `<tr><th scope="row">${r[0]}</th><td class="${r[2] ? 'off' : ''}">${v(r[1])}</td></tr>`).join('')}</table>`;
  }
});

def('properties-palette', class extends El {
  css = `:host { flex: 0 1 624px; display: flex; flex-direction: column; background: var(--panel); padding: 2px 0 2px 4px; }
    .frame { flex: 1; border-bottom: 1px solid var(--head); }
    .head { height: 20px; display: flex; align-items: center; gap: 5px; background: var(--head); padding: 0 0 2px 7px; border-radius: 4px 0 0 0; }
    .sel { display: flex; align-items: center; margin: 11px 7px 2px 5px; }
    .sel drop-box { flex: 1; height: 24px; padding-left: 0; margin-right: 5px; }
    .groups { margin-left: -4px; }`;
  get html() {
    const g = (l, r) => `<property-group label="${l}" rows='${JSON.stringify(r).replace(/'/g, '&#39;')}'></property-group>`;
    return `<div class="frame"><div class="head">${i('pgrip')}<span>PROPERTIES</span></div>
      <div class="sel"><drop-box label="Selection" value="No selection"></drop-box><icon-button icon="paddobj"></icon-button><icon-button icon="selall"></icon-button><icon-button icon="qsel"></icon-button></div>
      <div class="groups">
      ${g('General', [['Color', '#ByLayer'], ['Layer', 'S-WOOD-BEAM'], ['Linetype', '-ByLayer'], ['Linetype scale', '1.000'], ['Lineweight', '-ByLayer'], ['Transparency', 'ByLayer'], ['Thickness', '0"']])}
      ${g('Plot style', [['Plot style', 'ByColor', 1], ['Plot style table', 'SS_ENG.ctb'], ['Plot table attached to', 'Model', 1], ['Plot table type', 'Color dependent', 1]])}
      ${g('View', [['Center X', `32'-3 3/8"`, 1], ['Center Y', `54'-1 5/8"`, 1], ['Center Z', '0"', 1], ['Height', `2'-4 3/8"`, 1], ['Width', `3'-9"`, 1]])}
      ${g('Misc', [['Annotation scale', '4:1_XREF'], ['UCS icon On', 'No'], ['UCS icon at origin', 'Yes'], ['UCS per viewport', 'No', 1], ['UCS Name', '']])}
      </div></div>`;
  }
});

def('status-bar', class extends El {
  css = `:host { display: flex; height: 29px; padding-left: 16px; }
    .tabs { display: flex; height: 24px; align-items: center; flex: 1; }
    .m { height: 24px; width: 69px; margin-left: 9px; background: var(--panel); clip-path: polygon(9px 0, 100% 0, calc(100% - 9px) 100%, 0 100%); font-weight: 700; }
    .x { margin: 0 9px 0 7px; }
    .p { margin: 0 11px 0 11px; display: flex; }
    .st { display: flex; height: 24px; margin-top: 2px; gap: 3px; padding-right: 2px; }
    .s { display: flex; background: var(--panel); align-items: stretch; padding: 1px 0; }
    .s > button { padding: 0 3px; font-size: 12px; }
    .s .xref { display: flex; align-items: center; gap: 4px; font-size: 11px; padding: 0 4px; }`;
  get html() {
    const b = (n, w = 24, x = '') => `<icon-button icon="${n}" w="${w}" ${x}></icon-button>`;
    return `<div class="tabs">${i('burger')}<button class="m">Model</button><button class="x">SXXX</button>${i('slash')}<button class="p" aria-label="New layout">${i('plus')}</button>${i('slash')}</div>
    <div class="st"><div class="s"><button>MODEL</button></div>
      <div class="s">${b('grid', 23)}${b('snap', 25)}${b('bigcaret', 16)}</div>
      <div class="s">${b('ortho', 25)}${b('polar', 22, 'fill')}${b('bigcaret', 18)}${b('iso', 22)}${b('bigcaret', 17)}</div>
      <div class="s" style="gap:2px">${b('otrack', 22, 'fill')}${b('osnap', 22, 'fill')}${b('bigcaret', 14)}</div>
      <div class="s">${b('lw', 22, 'fill')}</div>
      <div class="s" style="margin-left:2px">${b('annovis', 22, 'fill')}${b('annoauto')}${b('anno', 26)}<button class="xref">4:1_XREF${i('bigcaret')}</button></div>
      <div class="s">${b('gear')}${b('bigcaret', 16)}</div>
      <div class="s" style="margin-left:-2px">${b('splus')}</div>
      <div class="s">${b('shapes')}</div>
      <div class="s" style="background:#4f6d8f">${b('isolate')}</div>
      <div class="s">${b('hw', 28)}${b('mon', 28)}${b('asso', 28)}</div>
      <div class="s">${b('clean')}</div>
      <div class="s" style="margin-left:-1px">${b('custom')}</div></div>`;
  }
});

def('task-app', class extends El {
  css = `:host { width: 44px; height: 46px; display: flex; }
    button { position: relative; width: 40px; margin: 3px 2px; display: flex; align-items: center; justify-content: center; border-radius: 4px; }
    :host([run]) button::after { content: ""; position: absolute; bottom: 0; left: 17px; width: 6px; height: 3px; border-radius: 2px; background: #9a9a9a; }
    :host([active]) button { background: #343536; box-shadow: inset 0 1px #444; }
    :host([active]) button::after { left: 12px; width: 16px; background: #4cc2ff; }
    b { position: absolute; top: 9px; left: 16px; font-size: 12px; line-height: 14px; } b + b { top: 23px; left: 18px; font-size: 5px; line-height: 10px; }`;
  get html() { return `<button aria-label="${this.a('icon')}">${i(this.a('icon'))}${this.hasAttribute('active') ? '<b>A</b><b>LT</b>' : ''}</button>`; }
});

def('task-bar', class extends El {
  css = `:host { display: grid; grid-template-columns: 1fr auto 1fr; height: 48px; background: #222324; border-top: 1px solid #454545; font-size: 12px; }
    .apps { display: flex; align-items: center; height: 46px; }
    .search { display: flex; align-items: center; gap: 10px; width: 220px; height: 32px; margin: 0 2px 0 3px; border-radius: 16px; background: #3f4040; border: 1px solid #555; padding: 0 12px; }
    .search input { flex: 1; min-width: 0; font-size: 13px; } .search input::placeholder { color: #cfcfcf; }
    .tray { display: flex; justify-content: flex-end; align-items: center; padding-right: 19px; color: #fff; height: 46px; }
    .clock { width: 69px; text-align: right; line-height: 16px; }`;
  get html() {
    const b = (n, w) => `<icon-button icon="${n}" w="${w}"></icon-button>`;
    return `<span></span><div class="apps"><task-app icon="win"></task-app><label class="search">${i('smag')}<input type="search" aria-label="Search" placeholder="Search"></label><task-app icon="taskview"></task-app>
      ${['snip', 'outlook', 'files', 'teams', 'spotify', 'chrome', 'whatsapp'].map(n => `<task-app icon="${n}" run></task-app>`).join('')}<task-app icon="acad" run active></task-app><task-app icon="claude"></task-app>${['stripes', 'settings', 'gapp'].map(n => `<task-app icon="${n}" run></task-app>`).join('')}</div>
      <div class="tray">${b('tup', 32)}${b('cloud', 34)}${b('mic', 32)}${b('wifi', 28)}${b('vol', 24)}${b('batt', 26)}<div class="clock"><div>3:09 PM</div><div>5/22/2026</div></div></div>`;
  }
});

def('cad-app', class extends El {
  css = `:host { display: flex; flex-direction: column; height: 100vh; background: var(--dark); }
    main { flex: 1; display: flex; min-height: 0; border: solid var(--panel); border-width: 4px 0; background: var(--panel); }`;
  html = `<title-bar></title-bar><ribbon-tabs></ribbon-tabs><ribbon-bar></ribbon-bar><file-tabs></file-tabs>
    <main><drawing-area></drawing-area><properties-palette></properties-palette></main>
    <status-bar></status-bar><task-bar></task-bar>`;
});
</script>
</body>
</html>
